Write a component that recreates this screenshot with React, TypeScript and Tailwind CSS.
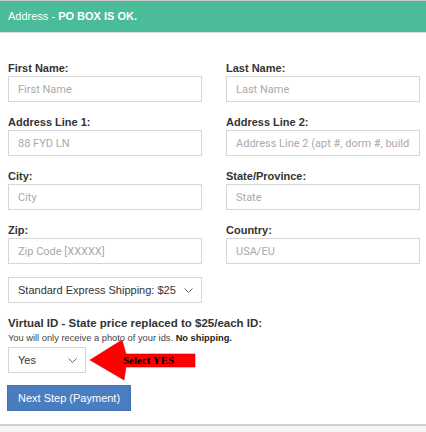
const sans = '"Liberation Sans", Arial, sans-serif'
const roboto = 'Roboto, "Liberation Sans", sans-serif'

function Chevron() {
  return (
    <svg width="9" height="5" viewBox="0 0 9 5" className="shrink-0">
      <polyline points="0.5,0.5 4.5,4.5 8.5,0.5" fill="none" stroke="#666" strokeWidth="1" />
    </svg>
  )
}

function Field({ label, placeholder }: { label: string; placeholder: string }) {
  return (
    <div className="mb-[13px]">
      <div className="h-[15px] text-[11px] leading-[15px] font-bold text-[#333]">{label}</div>
      <input
        className="block w-full h-[26px] border border-[#d6d6d6] bg-white px-[9px] text-[11px] text-[#555] placeholder:text-[#aaa] outline-none"
        style={{ fontFamily: roboto }}
        placeholder={placeholder}
      />
    </div>
  )
}

export default function App() {
  return (
    <div className="h-[432px] w-[426px] bg-[#f5f5f5]" style={{ fontFamily: sans }}>
      <div className="bg-white border-t border-t-[#c8c8c8] border-b-2 border-b-[#d0d0d0]">
        {/* Header */}
        <div className="h-[32px] bg-[#4bbc9a] border-b border-b-[#dcdcdc] flex items-center px-[8px] text-[11px] text-white">
          Address -&nbsp;<span className="font-bold">PO BOX IS OK.</span>
        </div>

        <div className="pt-[28px] pl-[8px] pr-[6px] pb-[13px]">
          <div className="grid grid-cols-2 gap-x-[24px]">
            <div>
              <Field label="First Name:" placeholder="First Name" />
              <Field label="Address Line 1:" placeholder="88 FYD LN" />
              <Field label="City:" placeholder="City" />
              <Field label="Zip:" placeholder="Zip Code [XXXXX]" />
            </div>
            <div>
              <Field label="Last Name:" placeholder="Last Name" />
              <Field label="Address Line 2:" placeholder="Address Line 2 (apt #, dorm #, building)" />
              <Field label="State/Province:" placeholder="State" />
              <Field label="Country:" placeholder="USA/EU" />
            </div>
          </div>

          {/* Shipping select */}
          <div className="w-[194px] h-[26px] border border-[#d6d6d6] flex items-center justify-between pl-[9px] pr-[8px] text-[11px] text-[#333]">
            <span>Standard Express Shipping: $25</span>
            <Chevron />
          </div>

          <div className="mt-[13px] text-[11.5px] leading-[15px] font-bold text-[#333]">
            Virtual ID - State price replaced to $25/each ID:
          </div>
          <div className="text-[9.3px] leading-[14px] text-[#444]">
            You will only receive a photo of your ids. <span className="font-bold text-[#222]">No shipping.</span>
          </div>

          <div className="relative mt-[2px]">
            <div className="w-[78px] h-[26px] border border-[#d6d6d6] flex items-center justify-between pl-[9px] pr-[8px] text-[11px] text-[#333]">
              <span>Yes</span>
              <Chevron />
            </div>
            {/* Red annotation arrow */}
            <div className="absolute left-[82px] top-[-7px] w-[106px] h-[41px]">
              <svg width="106" height="41" viewBox="0 0 106 41" className="absolute inset-0">
                <polygon
                  points="0,20 32,0 36,14 105,14 105,27 36,27 34,40"
                  fill="#ff0000"
                  stroke="#d40000"
                  strokeWidth="0.6"
                />
              </svg>
              <span
                className="absolute left-[33px] top-[13px] text-[11px] leading-[14px] font-bold text-black"
                style={{ fontFamily: '"Liberation Serif", "Times New Roman", serif' }}
              >
                Select YES
              </span>
            </div>
          </div>

          <button className="mt-[12px] -ml-[1px] h-[26px] px-[10px] bg-[#4a7dc0] border border-[#4373b3] text-white text-[11px]">
            Next Step (Payment)
          </button>
        </div>
      </div>
    </div>
  )
}
